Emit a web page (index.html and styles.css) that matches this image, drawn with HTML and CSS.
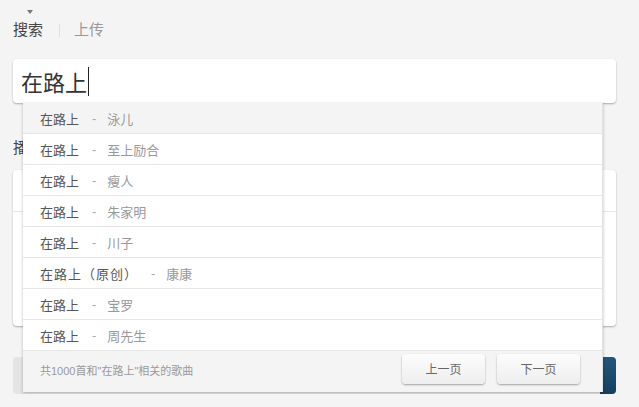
FILE: index.html
```html
<!DOCTYPE html>
<html lang="zh">
<head>
    <meta charset="UTF-8">
    <title>搜索</title>
    <link rel="stylesheet" href="styles.css">
</head>
<body>
    <div class="page">
        <div class="tabs">
            <span class="tab active">搜索</span>
            <span class="sep"></span>
            <span class="tab">上传</span>
        </div>

        <div class="search">
            <div class="search-input">在路上<span class="cursor"></span></div>

            <div class="suggest">
                <div class="item hover"><span class="song">在路上</span><span class="dash">-</span><span class="artist">泳儿</span></div>
                <div class="item"><span class="song">在路上</span><span class="dash">-</span><span class="artist">至上励合</span></div>
                <div class="item"><span class="song">在路上</span><span class="dash">-</span><span class="artist">瘦人</span></div>
                <div class="item"><span class="song">在路上</span><span class="dash">-</span><span class="artist">朱家明</span></div>
                <div class="item"><span class="song">在路上</span><span class="dash">-</span><span class="artist">川子</span></div>
                <div class="item"><span class="song wide">在路上（原创）</span><span class="dash">-</span><span class="artist">康康</span></div>
                <div class="item"><span class="song">在路上</span><span class="dash">-</span><span class="artist">宝罗</span></div>
                <div class="item"><span class="song">在路上</span><span class="dash">-</span><span class="artist">周先生</span></div>
                <div class="suggest-foot">
                    <span class="total">共1000首和"在路上"相关的歌曲</span>
                    <div class="pager">
                        <button class="pager-btn">上一页</button>
                        <button class="pager-btn">下一页</button>
                    </div>
                </div>
            </div>
        </div>

        <h3 class="label">播放列表</h3>
        <div class="card">
            <div class="card-row"></div>
            <div class="card-row"></div>
        </div>

        <div class="bar">
            <span class="bar-fill"></span>
        </div>
    </div>
</body>
</html>
```

FILE: styles.css
```css
body {
    margin: 0;
    background-color: #f4f4f4;
    font-family: "Liberation Sans", "Noto Sans CJK SC", sans-serif;
    color: #444;
}
.page {
    width: 603px;
    padding: 0 23px 0 13px;
}
.tabs {
    display: flex;
    align-items: center;
    height: 20px;
    padding-top: 20px;
}
.tab {
    position: relative;
    font-size: 15px;
    line-height: 20px;
    color: #999;
}
.tab.active {
    color: #444;
}
.tab.active::before {
    content: "";
    position: absolute;
    left: 14px;
    top: -10px;
    border-left: 3px solid transparent;
    border-right: 3px solid transparent;
    border-top: 4px solid #777;
}
.sep {
    width: 1px;
    height: 13px;
    background: #e0e0e0;
    margin: 0 14px 0 16px;
}
.search {
    position: relative;
    margin-top: 19px;
}
.search-input {
    display: flex;
    align-items: center;
    height: 44px;
    padding-left: 8px;
    background: white;
    border-radius: 4px;
    box-shadow: 0 1px 2px rgba(0,0,0,0.3);
    font-size: 22px;
    color: #333;
    box-sizing: border-box;
}
.cursor {
    width: 1px;
    height: 29px;
    background: #222;
    margin-left: 1px;
}
.suggest {
    position: absolute;
    left: 10px;
    top: 44px;
    width: 579px;
    background: white;
    border-right: 1px solid #e2e2e2;
    box-shadow: 0 1px 3px rgba(0,0,0,0.25);
    z-index: 2;
}
.item {
    display: flex;
    align-items: center;
    height: 30px;
    padding-left: 17px;
    border-bottom: 1px solid #e6e6e6;
    font-size: 13px;
}
.item.hover {
    background: #f4f4f4;
}
.song {
    color: #555;
}
.song.wide {
    letter-spacing: 1px;
}
.dash {
    color: #aaa;
    margin: 0 11px 0 13px;
}
.artist {
    color: #999;
}
.suggest-foot {
    display: flex;
    align-items: center;
    justify-content: space-between;
    height: 41px;
    padding: 0 22px 0 17px;
    background: #f4f4f4;
}
.total {
    font-size: 11px;
    color: #999;
    margin-top: -3px;
}
.pager {
    display: flex;
    gap: 12px;
    margin-top: -6px;
}
.pager-btn {
    width: 83px;
    height: 30px;
    border: none;
    border-radius: 4px;
    background: linear-gradient(#fdfdfd, #eeeeee);
    box-shadow: 0 1px 2px rgba(0,0,0,0.35);
    font-family: "Liberation Sans", "Noto Sans CJK SC", sans-serif;
    font-size: 12px;
    color: #666;
}
.label {
    margin: 35px 0 0 0;
    font-size: 15px;
    font-weight: normal;
    line-height: 20px;
    color: #444;
}
.card {
    margin-top: 12px;
    background: white;
    border-radius: 4px;
    box-shadow: 0 1px 2px rgba(0,0,0,0.3);
    height: 156px;
}
.card-row {
    height: 41px;
    border-bottom: 1px solid #e6e6e6;
}
.card-row + .card-row {
    border-bottom: none;
}
.bar {
    display: flex;
    justify-content: flex-end;
    margin-top: 31px;
    height: 37px;
    background: #e4e4e4;
    border-radius: 4px;
    overflow: hidden;
}
.bar-fill {
    width: 16px;
    background: linear-gradient(#21577c, #153f5e);
}
```
